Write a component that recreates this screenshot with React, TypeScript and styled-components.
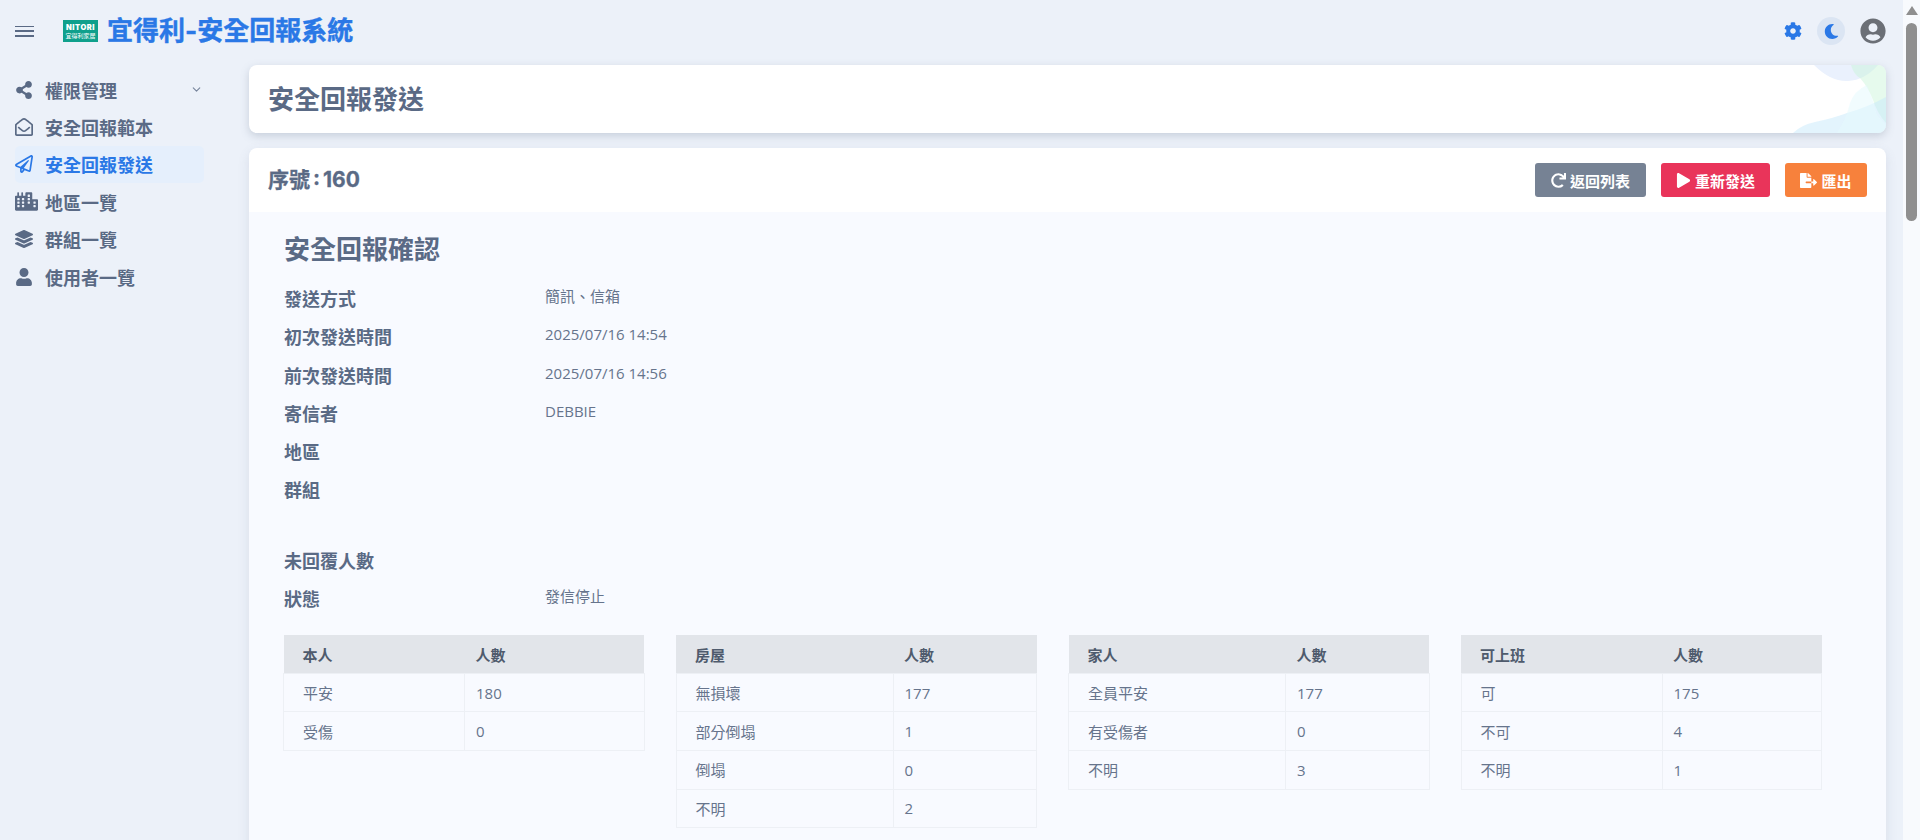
import { createGlobalStyle } from 'styled-components';
import styled from 'styled-components';
import {
  FaCity,
  FaCog,
  FaFileExport,
  FaLayerGroup,
  FaMoon,
  FaPlay,
  FaRedo,
  FaRegEnvelopeOpen,
  FaRegPaperPlane,
  FaShareAlt,
  FaUser,
  FaUserCircle,
} from 'react-icons/fa';
import { ChevronDown } from 'lucide-react';
import type { ReactNode } from 'react';

const GlobalStyle = createGlobalStyle`
  html, body {
    margin: 0;
    padding: 0;
    background: #ecf1f9;
    color: #5a6a85;
    font-family: 'Open Sans', 'Noto Sans CJK TC', sans-serif;
  }
  * { box-sizing: border-box; }
`;

const Frame = styled.div`
  height: 840px;
  display: flex;
  overflow: hidden;
`;

const Page = styled.div`
  flex: 1;
  min-width: 0;
`;

const ScrollRail = styled.div`
  width: 17px;
  flex: none;
  background: #f8fafd;
  padding-top: 6px;
  display: flex;
  flex-direction: column;
  align-items: center;
`;

const ScrollArrow = styled.div`
  width: 0;
  height: 0;
  border-left: 6px solid transparent;
  border-right: 6px solid transparent;
  border-bottom: 9px solid #8f8f8f;
`;

const ScrollThumb = styled.div`
  width: 11px;
  height: 198px;
  margin-top: 8px;
  border-radius: 6px;
  background: #8f8f8f;
`;

const TopBar = styled.header`
  height: 65px;
  display: flex;
  align-items: center;
  padding: 0 17px 0 15px;
`;

const Burger = styled.div`
  width: 19px;
  height: 11px;
  margin-top: -3px;
  display: flex;
  flex-direction: column;
  justify-content: space-between;
  span {
    display: block;
    height: 1.5px;
    background: #5a6a85;
  }
`;

const Logo = styled.div`
  width: 35px;
  height: 22px;
  margin: -3px 0 0 29px;
  background: #0fa08c;
  color: #fff;
  display: flex;
  flex-direction: column;
  align-items: center;
  justify-content: center;
  span {
    font-family: 'Inter', sans-serif;
    font-weight: 900;
    font-size: 7.5px;
    line-height: 9px;
    letter-spacing: 0.5px;
  }
  small {
    font-family: 'Noto Sans CJK TC', sans-serif;
    font-size: 6px;
    line-height: 7px;
  }
`;

const BrandTitle = styled.h1`
  margin: -3px 0 0 9px;
  font-size: 26px;
  line-height: 36px;
  font-weight: 700;
  color: #2a78e6;
  font-family: 'Inter', 'Noto Sans CJK TC', sans-serif;
  -webkit-text-stroke: 0.4px #2a78e6;
`;

const TopActions = styled.div`
  margin-left: auto;
  margin-top: -3px;
  display: flex;
  align-items: center;
`;

const MoonButton = styled.div`
  width: 28px;
  height: 28px;
  margin: 0 15px 0 15px;
  border-radius: 50%;
  background: #dbe5f3;
  color: #2a78e6;
  display: flex;
  align-items: center;
  justify-content: center;
`;

const Shell = styled.div`
  display: flex;
  align-items: flex-start;
`;

const Sidebar = styled.nav`
  width: 249px;
  flex: none;
  padding: 6px 0 0 15px;
`;

const NavItem = styled.div<{ $active?: boolean }>`
  position: relative;
  width: 189px;
  height: 37.4px;
  display: flex;
  align-items: center;
  border-radius: 5px;
  background: ${({ $active }) => ($active ? '#e5effc' : 'transparent')};
  color: ${({ $active }) => ($active ? '#2a78e6' : '#5a6a85')};
  font-size: 18px;
  font-weight: 700;
  white-space: nowrap;
`;

const NavIcon = styled.span`
  width: 30px;
  flex: none;
  display: flex;
  align-items: center;
`;

const NavChevron = styled.span`
  margin-left: auto;
  margin-right: 1px;
  display: flex;
  opacity: 0.8;
`;

const Main = styled.main`
  flex: 1;
  min-width: 0;
  padding-right: 17px;
`;

const Card = styled.section`
  background: #fff;
  border-radius: 8px;
  box-shadow: 0 4px 12px rgba(90, 106, 133, 0.14);
  overflow: hidden;
`;

const TitleCard = styled(Card)`
  position: relative;
  height: 68px;
  display: flex;
  align-items: center;
  padding-left: 19px;
  margin-bottom: 15px;
  box-shadow: 0 3px 8px rgba(90, 106, 133, 0.25);
`;

const PageTitle = styled.h2`
  margin: 0;
  font-size: 26px;
  font-weight: 700;
  line-height: 34px;
`;

const TitleArt = styled.svg`
  position: absolute;
  top: 0;
  right: 0;
`;

const CardHeader = styled.div`
  height: 64px;
  display: flex;
  align-items: center;
  padding: 0 19px 0 19px;
`;

const SerialTitle = styled.h3`
  margin: 0;
  font-family: 'Inter', 'Noto Sans CJK TC', sans-serif;
  font-size: 21px;
  font-weight: 700;
  line-height: 28px;
  word-spacing: -2px;
  -webkit-text-stroke: 0.3px #5a6a85;
`;

const ButtonRow = styled.div`
  margin-left: auto;
  display: flex;
  gap: 15px;
`;

const ActionButton = styled.button<{ $bg: string; $width: number }>`
  width: ${({ $width }) => $width}px;
  height: 34px;
  border: none;
  border-radius: 3px;
  background: ${({ $bg }) => $bg};
  color: #fff;
  display: flex;
  align-items: center;
  justify-content: center;
  gap: 4px;
  padding: 0;
  font-family: inherit;
  font-size: 15px;
  font-weight: 700;
`;

const CardBody = styled.div`
  background: #f8faff;
  padding: 17px 64px 40px 35px;
  min-height: 800px;
`;

const SectionTitle = styled.h3`
  margin: 0 0 11px;
  font-size: 26px;
  font-weight: 700;
  line-height: 40px;
`;

const InfoRow = styled.div<{ $gap?: number }>`
  display: flex;
  height: 38.3px;
  margin-top: ${({ $gap }) => $gap ?? 0}px;
`;

const InfoLabel = styled.div`
  width: 261px;
  font-size: 18px;
  font-weight: 700;
  line-height: 38px;
`;

const InfoValue = styled.div`
  font-size: 15px;
  line-height: 32px;
  color: #66748c;
`;

const TableGrid = styled.div`
  display: grid;
  grid-template-columns: repeat(4, 1fr);
  column-gap: 31px;
  align-items: start;
  margin: 17px 0 0 -1px;
`;

const StatTable = styled.table`
  width: 100%;
  table-layout: fixed;
  border-collapse: collapse;
  font-size: 15px;

  th + th,
  td + td {
    padding-left: 11px;
  }
`;

const HeadCell = styled.th<{ $width?: number }>`
  width: ${({ $width }) => ($width ? `${$width}px` : 'auto')};
  height: 38px;
  padding: 0 19px;
  background: #e2e5ea;
  color: #4f5b6d;
  text-align: left;
  font-weight: 700;
`;

const BodyCell = styled.td`
  height: 38.6px;
  padding: 0 19px;
  border: 1px solid #edf0f5;
  color: #66748c;
`;

const NavEntry = ({
  icon,
  label,
  active,
  children,
}: {
  icon: ReactNode;
  label: string;
  active?: boolean;
  children?: ReactNode;
}) => (
  <NavItem $active={active}>
    <NavIcon>{icon}</NavIcon>
    {label}
    {children}
  </NavItem>
);

const tables = [
  {
    title: '本人',
    split: 181,
    rows: [
      ['平安', '180'],
      ['受傷', '0'],
    ],
  },
  {
    title: '房屋',
    split: 217,
    rows: [
      ['無損壞', '177'],
      ['部分倒塌', '1'],
      ['倒塌', '0'],
      ['不明', '2'],
    ],
  },
  {
    title: '家人',
    split: 217,
    rows: [
      ['全員平安', '177'],
      ['有受傷者', '0'],
      ['不明', '3'],
    ],
  },
  {
    title: '可上班',
    split: 201,
    rows: [
      ['可', '175'],
      ['不可', '4'],
      ['不明', '1'],
    ],
  },
];

const App = () => (
  <Frame>
    <GlobalStyle />
    <Page>
      <TopBar>
        <Burger>
          <span />
          <span />
          <span />
        </Burger>
        <Logo>
          <span>NITORI</span>
          <small>宜得利家居</small>
        </Logo>
        <BrandTitle>宜得利-安全回報系統</BrandTitle>
        <TopActions>
          <FaCog size={18} color='#2a78e6' />
          <MoonButton>
            <FaMoon size={15} />
          </MoonButton>
          <FaUserCircle size={26} color='#6b6f76' />
        </TopActions>
      </TopBar>
      <Shell>
        <Sidebar>
          <NavEntry icon={<FaShareAlt size={18} />} label='權限管理'>
            <NavChevron>
              <ChevronDown size={13} />
            </NavChevron>
          </NavEntry>
          <NavEntry icon={<FaRegEnvelopeOpen size={18} />} label='安全回報範本' />
          <NavEntry icon={<FaRegPaperPlane size={18} />} label='安全回報發送' active />
          <NavEntry icon={<FaCity size={23} />} label='地區一覽' />
          <NavEntry icon={<FaLayerGroup size={18} />} label='群組一覽' />
          <NavEntry icon={<FaUser size={18} />} label='使用者一覽' />
        </Sidebar>
        <Main>
          <TitleCard>
            <PageTitle>安全回報發送</PageTitle>
            <TitleArt width='140' height='68' viewBox='0 0 140 68'>
              <path d='M68 0Q85 17 102 16T132 0Z' fill='#eaf1fd' />
              <path d='M105 0Q108 10 114 13Q122 22 127 35Q131 48 140 58V0Z' fill='#c8f5d8' fillOpacity='0.45' />
              <path d='M47 68Q55 60 69 57Q88 53 101 48Q122 42 140 32V68Z' fill='#c4e9fa' fillOpacity='0.48' />
              <path d='M91 68Q100 55 104 38Q108 26 121 20Q127 34 131 50L140 60V68Z' fill='#e6fafd' fillOpacity='0.55' />
            </TitleArt>
          </TitleCard>
          <Card>
            <CardHeader>
              <SerialTitle>序號 : 160</SerialTitle>
              <ButtonRow>
                <ActionButton $bg='#768294' $width={111}>
                  <FaRedo size={15} />
                  返回列表
                </ActionButton>
                <ActionButton $bg='#e9345a' $width={109}>
                  <FaPlay size={15} />
                  重新發送
                </ActionButton>
                <ActionButton $bg='#f7813c' $width={82}>
                  <FaFileExport size={17} />
                  匯出
                </ActionButton>
              </ButtonRow>
            </CardHeader>
            <CardBody>
              <SectionTitle>安全回報確認</SectionTitle>
              <InfoRow>
                <InfoLabel>發送方式</InfoLabel>
                <InfoValue>簡訊、信箱</InfoValue>
              </InfoRow>
              <InfoRow>
                <InfoLabel>初次發送時間</InfoLabel>
                <InfoValue>2025/07/16 14:54</InfoValue>
              </InfoRow>
              <InfoRow>
                <InfoLabel>前次發送時間</InfoLabel>
                <InfoValue>2025/07/16 14:56</InfoValue>
              </InfoRow>
              <InfoRow>
                <InfoLabel>寄信者</InfoLabel>
                <InfoValue>DEBBIE</InfoValue>
              </InfoRow>
              <InfoRow>
                <InfoLabel>地區</InfoLabel>
              </InfoRow>
              <InfoRow>
                <InfoLabel>群組</InfoLabel>
              </InfoRow>
              <InfoRow $gap={32}>
                <InfoLabel>未回覆人數</InfoLabel>
              </InfoRow>
              <InfoRow>
                <InfoLabel>狀態</InfoLabel>
                <InfoValue>發信停止</InfoValue>
              </InfoRow>
              <TableGrid>
                {tables.map((table) => (
                  <StatTable key={table.title}>
                    <thead>
                      <tr>
                        <HeadCell $width={table.split}>{table.title}</HeadCell>
                        <HeadCell>人數</HeadCell>
                      </tr>
                    </thead>
                    <tbody>
                      {table.rows.map(([name, count]) => (
                        <tr key={name}>
                          <BodyCell>{name}</BodyCell>
                          <BodyCell>{count}</BodyCell>
                        </tr>
                      ))}
                    </tbody>
                  </StatTable>
                ))}
              </TableGrid>
            </CardBody>
          </Card>
        </Main>
      </Shell>
    </Page>
    <ScrollRail>
      <ScrollArrow />
      <ScrollThumb />
    </ScrollRail>
  </Frame>
);

export default App;
